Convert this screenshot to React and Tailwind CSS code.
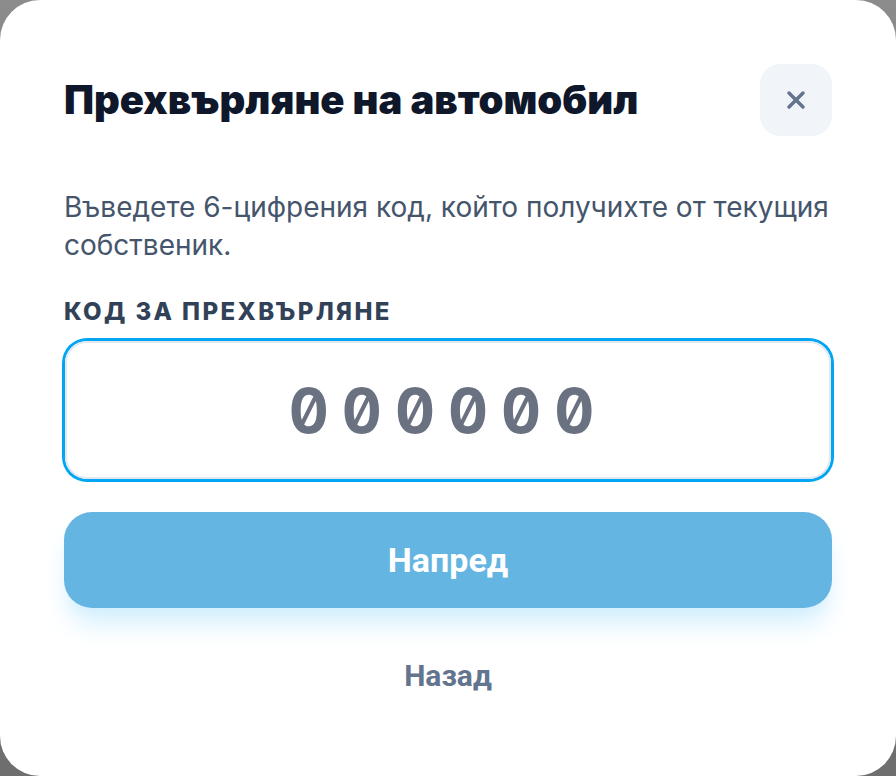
import React, { useState } from 'react';
import { X } from 'lucide-react';

const TransferCar = () => {
    const [code, setCode] = useState('');

    return (
        <div className="w-[896px] h-[776px] bg-gradient-to-b from-[#8c8c8c] to-[#6e6e6e]">
            <div className="w-full h-full bg-white rounded-[40px] px-16 pt-16 flex flex-col font-['Inter',sans-serif]">
                {/* Header */}
                <div className="flex items-center justify-between">
                    <h1 className="text-[40px] leading-[48px] font-black text-slate-900">
                        Прехвърляне на автомобил
                    </h1>
                    <button className="w-[72px] h-[72px] rounded-[20px] bg-slate-100 flex items-center justify-center text-slate-500">
                        <X className="w-7 h-7" strokeWidth={3} />
                    </button>
                </div>

                <p className="mt-[52px] text-[28px] leading-[38px] text-slate-600">
                    Въведете 6-цифрения код, който получихте от текущия собственик.
                </p>

                <label className="mt-[34px] text-[24px] leading-7 font-extrabold uppercase tracking-[0.1em] text-slate-700">
                    Код за прехвърляне
                </label>

                <div className="mt-[15px] mx-[1px]">
                    <input
                        value={code}
                        onChange={(e) => setCode(e.target.value)}
                        placeholder="000000"
                        maxLength={6}
                        className="w-full h-[138px] rounded-[22px] border-2 border-slate-200 ring-[3px] ring-sky-500 outline-none text-center font-['Inter',monospace] slashed-zero tabular-nums font-bold text-[62px] tracking-[0.21em] text-slate-700 placeholder:text-gray-500"
                    />
                </div>

                <button
                    disabled={code.length < 6}
                    className="mt-[33px] h-24 rounded-[28px] bg-sky-600 disabled:opacity-60 text-white text-[34px] font-bold font-['Roboto',sans-serif] shadow-xl shadow-sky-200"
                >
                    Напред
                </button>

                <button className="mt-[50px] self-center text-[30px] leading-9 font-bold text-slate-500 font-['Roboto',sans-serif]">
                    Назад
                </button>
            </div>
        </div>
    );
};

export default TransferCar;
